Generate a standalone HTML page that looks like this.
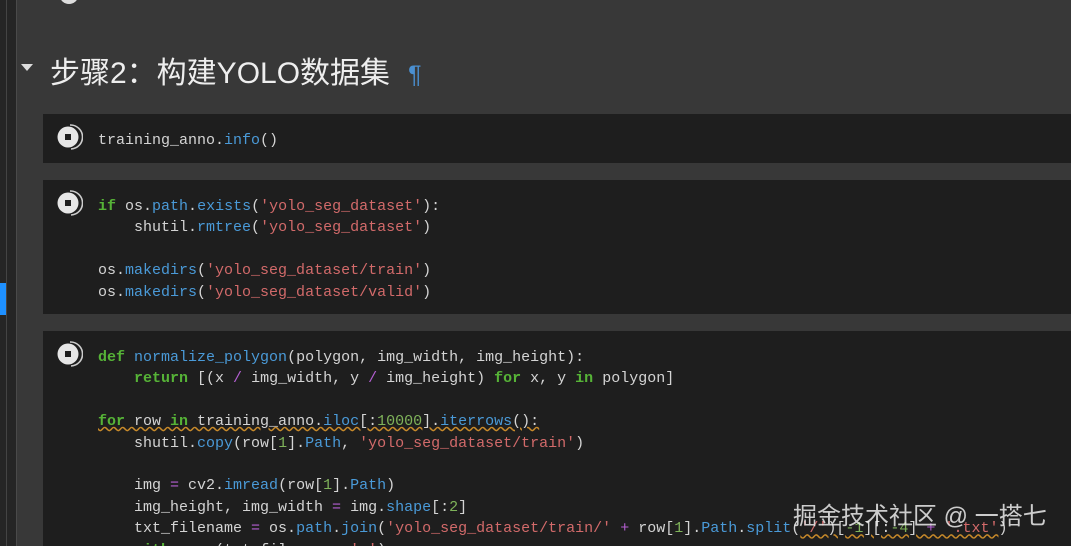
<!DOCTYPE html>
<html style="overflow:hidden"><head><meta charset="utf-8"><style>
html,body{margin:0;width:1071px;height:546px;overflow:hidden}
body{background:#383838;position:relative;font-family:"Liberation Sans","Noto Sans CJK SC",sans-serif}
.strip{position:absolute;left:0;top:0;width:16px;height:546px;background:#252525;border-right:1px solid #4a4a4a}
.strip:before{content:"";position:absolute;left:6px;top:0;width:1px;height:546px;background:#444}
.blue{position:absolute;left:0;top:283px;width:6px;height:32px;background:#1e90ff}
.cell{position:absolute;left:43px;right:0;background:#1e1e1e;overflow:hidden}
.code{position:absolute;left:98px;font-family:"Liberation Mono",monospace;font-size:15px;color:#d4d4d4;white-space:pre;line-height:21.4px}
.k{color:#56b337;font-weight:bold}.f{color:#4a9ad8}.s{color:#d26a6a}.n{color:#7fb35a}.o{color:#b45fd2}
.run{position:absolute;left:55px;width:28px;height:28px}
h2{position:absolute;left:50px;top:48px;margin:0;font-weight:normal;font-size:30px;color:#eee}
.tri{position:absolute;left:21px;top:64px;border-left:6px solid transparent;border-right:6px solid transparent;border-top:7px solid #ddd}
.pil{color:#4a8fd0;margin-left:18px;font-size:25px}
.wm{position:absolute;left:793px;top:496px;font-size:24px;color:rgba(235,235,235,.85)}
.u{text-decoration:underline wavy #c88a2a}
</style></head><body>
<div class="strip"></div><div class="blue"></div>
<div style="position:absolute;left:60px;top:-12px;width:18px;height:16px;border-radius:50%;background:#ddd"></div>
<div class="tri"></div>
<h2>步骤2：构建YOLO数据集<span class="pil">¶</span></h2>
<div class="cell" style="top:114px;height:49px"></div>
<div class="cell" style="top:180px;height:134px"></div>
<div class="cell" style="top:331px;height:215px"></div>
<svg class="run" style="top:123px" viewBox="0 0 28 28"><circle cx="13" cy="14" r="10.5" fill="#e6e6e6"/><rect x="10" y="11" width="6" height="6" fill="#1e1e1e"/><path d="M15 2A12 12 0 0 1 16 26" stroke="#ccc" stroke-width="1.6" fill="none"/></svg>
<svg class="run" style="top:189px" viewBox="0 0 28 28"><circle cx="13" cy="14" r="10.5" fill="#e6e6e6"/><rect x="10" y="11" width="6" height="6" fill="#1e1e1e"/><path d="M15 2A12 12 0 0 1 16 26" stroke="#ccc" stroke-width="1.6" fill="none"/></svg>
<svg class="run" style="top:340px" viewBox="0 0 28 28"><circle cx="13" cy="14" r="10.5" fill="#e6e6e6"/><rect x="10" y="11" width="6" height="6" fill="#1e1e1e"/><path d="M15 2A12 12 0 0 1 16 26" stroke="#ccc" stroke-width="1.6" fill="none"/></svg>
<div class="code" style="top:130px">training_anno.<span class="f">info</span>()</div>
<div class="code" style="top:196px"><span class="k">if</span> os.<span class="f">path</span>.<span class="f">exists</span>(<span class="s">'yolo_seg_dataset'</span>):
    shutil.<span class="f">rmtree</span>(<span class="s">'yolo_seg_dataset'</span>)

os.<span class="f">makedirs</span>(<span class="s">'yolo_seg_dataset/train'</span>)
os.<span class="f">makedirs</span>(<span class="s">'yolo_seg_dataset/valid'</span>)</div>
<div class="code" style="top:347px"><span class="k">def</span> <span class="f">normalize_polygon</span>(polygon, img_width, img_height):
    <span class="k">return</span> [(x <span class="o">/</span> img_width, y <span class="o">/</span> img_height) <span class="k">for</span> x, y <span class="k">in</span> polygon]

<span class="u"><span class="k">for</span> row <span class="k">in</span> training_anno.<span class="f">iloc</span>[:<span class="n">10000</span>].<span class="f">iterrows</span>():</span>
    shutil.<span class="f">copy</span>(row[<span class="n">1</span>].<span class="f">Path</span>, <span class="s">'yolo_seg_dataset/train'</span>)

    img <span class="o">=</span> cv2.<span class="f">imread</span>(row[<span class="n">1</span>].<span class="f">Path</span>)
    img_height, img_width <span class="o">=</span> img.<span class="f">shape</span>[:<span class="n">2</span>]
    txt_filename <span class="o">=</span> os.<span class="f">path</span>.<span class="f">join</span>(<span class="s">'yolo_seg_dataset/train/'</span> <span class="o">+</span> row[<span class="n">1</span>].<span class="f">Path</span>.<span class="f">split</span>(<span class="u"><span class="s">'/'</span>)[<span class="n">-1</span>][:<span class="n">-4</span>] <span class="o">+</span> <span class="s">'.txt'</span></span>)
    <span class="k">with</span> <span class="f">open</span>(txt_filename, <span class="s">'w'</span>) <span class="k">as</span> wr:</div>
<div class="wm">掘金技术社区 @ 一搭七</div>
</body></html>
